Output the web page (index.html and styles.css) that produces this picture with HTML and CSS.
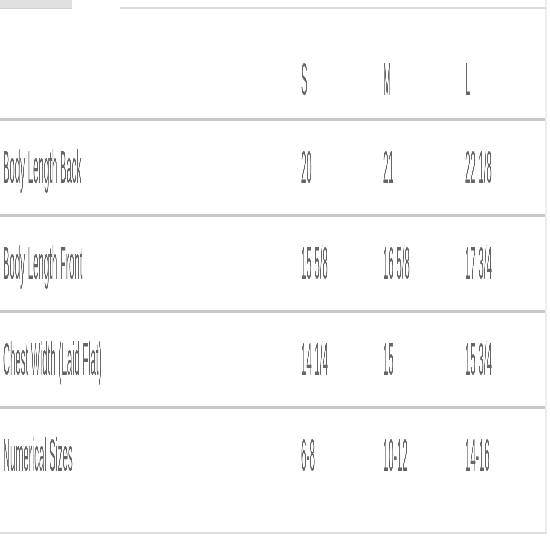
FILE: index.html
```html
<!DOCTYPE html>
<html>
<head>
<meta charset="utf-8">
<link rel="stylesheet" href="styles.css">
</head>
<body>
<div class="page">
  <div class="tabs">
    <div class="tab tab-off"></div>
    <div class="tab tab-on"></div>
    <div class="tab-rest"></div>
  </div>
  <div class="panel">
    <div class="row head">
      <div class="cell"></div>
      <div class="cell"><span class="t">S</span></div>
      <div class="cell"><span class="t">M</span></div>
      <div class="cell"><span class="t">L</span></div>
    </div>
    <div class="row">
      <div class="cell"><span class="t">Body Length Back</span></div>
      <div class="cell"><span class="t">20</span></div>
      <div class="cell"><span class="t">21</span></div>
      <div class="cell"><span class="t">22 1/8</span></div>
    </div>
    <div class="row">
      <div class="cell"><span class="t">Body Length Front</span></div>
      <div class="cell"><span class="t">15 5/8</span></div>
      <div class="cell"><span class="t">16 5/8</span></div>
      <div class="cell"><span class="t">17 3/4</span></div>
    </div>
    <div class="row">
      <div class="cell"><span class="t">Chest Width (Laid Flat)</span></div>
      <div class="cell"><span class="t">14 1/4</span></div>
      <div class="cell"><span class="t">15</span></div>
      <div class="cell"><span class="t">15 3/4</span></div>
    </div>
    <div class="row last">
      <div class="cell"><span class="t">Numerical Sizes</span></div>
      <div class="cell"><span class="t">6-8</span></div>
      <div class="cell"><span class="t">10-12</span></div>
      <div class="cell"><span class="t">14-16</span></div>
    </div>
  </div>
</div>
</body>
</html>
```

FILE: styles.css
```css
html, body {
  margin: 0;
  padding: 0;
  background: #ffffff;
}

.page {
  width: 547px;
  font-family: "Liberation Sans", Arial, sans-serif;
  color: #666666;
}

.tabs {
  display: flex;
  height: 9px;
}

.tab-off {
  width: 72px;
  background: #e0e0e0;
  border-bottom: 1px solid #d2d2d2;
  box-sizing: border-box;
}

.tab-on {
  width: 48px;
  background: #ffffff;
}

.tab-rest {
  flex: 1;
  border-bottom: 2px solid #dddddd;
  border-right: 2px solid #eeeeee;
}

.panel {
  border-right: 2px solid #eeeeee;
  border-bottom: 2px solid #dedede;
}

.row {
  display: grid;
  grid-template-columns: 301px 82px 82px 80px;
  border-bottom: 3px solid #c8c8c8;
  padding: 20px 0 21px;
}

.row.head {
  padding: 44px 0 13px;
}

.row.last {
  border-bottom: none;
  padding: 20px 0 51px;
}

.cell {
  min-width: 0;
  height: 52px;
  overflow: hidden;
  white-space: nowrap;
}

.cell:first-child {
  padding-left: 3px;
}

.t {
  display: inline-block;
  font-size: 46px;
  line-height: 52px;
  transform: scaleX(0.21);
  transform-origin: 0 50%;
  white-space: nowrap;
  will-change: transform;
}
```
